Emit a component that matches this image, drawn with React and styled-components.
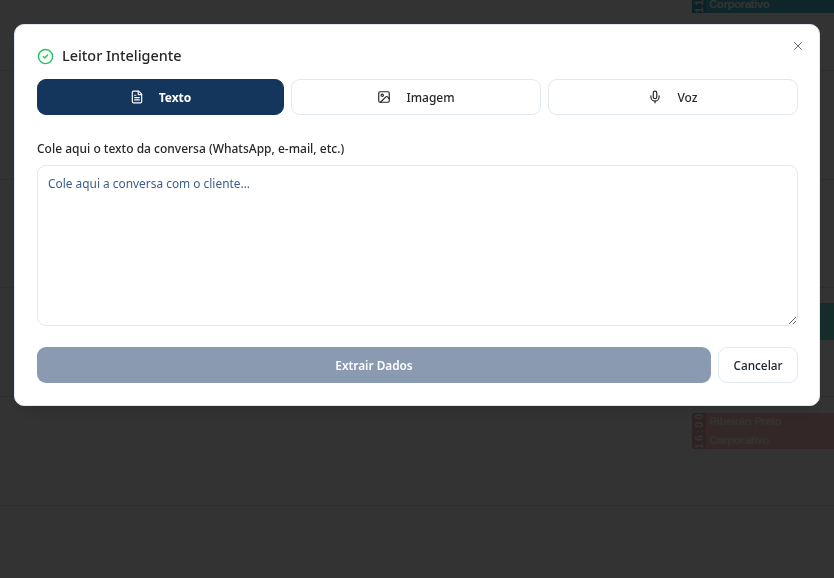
import React from 'react';
import styled, { createGlobalStyle } from 'styled-components';
import { CircleCheck, FileText, Image, Mic, X } from 'lucide-react';

const GlobalStyle = createGlobalStyle`
  html, body {
    margin: 0;
    height: 100%;
    background: #fff;
    font-family: "Noto Sans", "Liberation Sans", sans-serif;
    overflow: hidden;
  }
`;

const Calendar = styled.div`
  height: 578px;
  background: #fff;
`;

const Row = styled.div`
  height: ${({ $height }) => $height || 108.7}px;
  box-sizing: border-box;
  border-bottom: 1px solid #e6e6e6;
  display: grid;
  grid-template-columns: 146px 182px 182px 182px 142px;
  padding-top: ${({ $top }) => $top || 0}px;
`;

const Event = styled.div`
  grid-column: 5;
  height: ${({ $height }) => $height}px;
  display: flex;
  align-items: flex-end;
  overflow: hidden;
  background: ${({ $color }) => $color};
  border-radius: ${({ $flat }) => ($flat ? '0' : '3px 0 0 3px')};
  font-family: "Liberation Sans", sans-serif;
  font-size: 11.5px;
  font-weight: 700;
  color: #fff;
`;

const EventTime = styled.div`
  align-self: stretch;
  width: 14px;
  writing-mode: vertical-rl;
  transform: rotate(180deg);
  text-align: center;
  letter-spacing: 1.8px;
  font-size: 11px;
  line-height: 14px;
  background: rgba(0, 0, 0, 0.1);
`;

const EventText = styled.div`
  padding-left: 3px;
  line-height: 18.5px;
  letter-spacing: -0.45px;
`;

const Overlay = styled.div`
  position: fixed;
  inset: 0;
  background: rgba(0, 0, 0, 0.8);
  z-index: 10;
  padding: 24px 14px 0;
`;

const Modal = styled.div`
  position: relative;
  box-sizing: border-box;
  width: 806px;
  height: 382px;
  padding: 22px;
  background: #fff;
  border: 1px solid #e2e8f0;
  border-radius: 10px;
  box-shadow: 0 10px 15px -3px rgba(0, 0, 0, 0.1);
`;

const CloseButton = styled.button`
  position: absolute;
  top: 14px;
  right: 14px;
  padding: 0;
  width: 14px;
  height: 14px;
  display: flex;
  background: none;
  border: 0;
  color: #56595f;
`;

const Title = styled.h2`
  display: flex;
  align-items: center;
  gap: 8px;
  margin: 0 0 14px;
  height: 18px;
  font-size: 14.4px;
  line-height: 16px;
  font-weight: 500;
  color: #27272a;
  svg {
    color: #22c55e;
  }
`;

const Tabs = styled.div`
  display: grid;
  grid-template-columns: 247px 250px 250px;
  gap: 7px;
  margin: 0 0 25px;
  width: 761px;
`;

const Tab = styled.button`
  box-sizing: border-box;
  height: 36px;
  display: flex;
  align-items: center;
  justify-content: center;
  gap: 15px;
  border-radius: 9px;
  font-family: inherit;
  font-size: 12px;
  font-weight: ${({ $active }) => ($active ? 700 : 500)};
  color: ${({ $active }) => ($active ? '#fff' : '#27272a')};
  background: ${({ $active }) => ($active ? '#14365d' : '#fff')};
  border: 1px solid ${({ $active }) => ($active ? '#14365d' : '#e2e8f0')};
`;

const Label = styled.label`
  display: block;
  font-size: 12px;
  line-height: 18px;
  font-weight: 500;
  color: #27272a;
  margin-bottom: 7px;
`;

const TextArea = styled.textarea`
  display: block;
  box-sizing: border-box;
  width: 761px;
  height: 161px;
  padding: 7px 10px;
  border: 1px solid #e2e8f0;
  border-radius: 9px;
  outline: none;
  background: #fff;
  font-family: inherit;
  font-size: 11.9px;
  line-height: 20px;
  &::placeholder {
    color: #3b5f8f;
    opacity: 1;
  }
`;

const Actions = styled.div`
  display: flex;
  gap: 7px;
  margin-top: 21px;
  width: 761px;
`;

const Submit = styled.button`
  flex: 1;
  height: 36px;
  border: 0;
  border-radius: 9px;
  background: #8a9ab0;
  color: #fff;
  font-family: inherit;
  font-size: 11.8px;
  font-weight: 600;
`;

const Cancel = styled.button`
  box-sizing: border-box;
  width: 80px;
  height: 36px;
  border: 1px solid #e2e8f0;
  border-radius: 9px;
  background: #fff;
  color: #1a202c;
  font-family: inherit;
  font-size: 11.8px;
  font-weight: 500;
`;

export default function App() {
  return (
    <>
      <GlobalStyle />
      <Calendar>
        <Row $height={71}>
          <Event $color="#46b9d2" $height={13} $flat>
            <EventTime>11:</EventTime>
            <EventText>Corporativo</EventText>
          </Event>
        </Row>
        <Row />
        <Row />
        <Row $top={15}>
          <Event $color="#64e0d2" $height={37} />
        </Row>
        <Row $top={16}>
          <Event $color="#ffc0c0" $height={36}>
            <EventTime>16:00</EventTime>
            <EventText>
              Ribeirão Preto
              <br />
              Corporativo
            </EventText>
          </Event>
        </Row>
      </Calendar>
      <Overlay>
        <Modal>
          <CloseButton aria-label="Fechar">
            <X size={14} strokeWidth={1.5} />
          </CloseButton>
          <Title>
            <CircleCheck size={17} strokeWidth={2} />
            Leitor Inteligente
          </Title>
          <Tabs>
            <Tab $active>
              <FileText size={14} strokeWidth={2} />
              Texto
            </Tab>
            <Tab>
              <Image size={14} strokeWidth={2} />
              Imagem
            </Tab>
            <Tab>
              <Mic size={14} strokeWidth={2} />
              Voz
            </Tab>
          </Tabs>
          <Label>Cole aqui o texto da conversa (WhatsApp, e-mail, etc.)</Label>
          <TextArea placeholder="Cole aqui a conversa com o cliente..." />
          <Actions>
            <Submit>Extrair Dados</Submit>
            <Cancel>Cancelar</Cancel>
          </Actions>
        </Modal>
      </Overlay>
    </>
  );
}
